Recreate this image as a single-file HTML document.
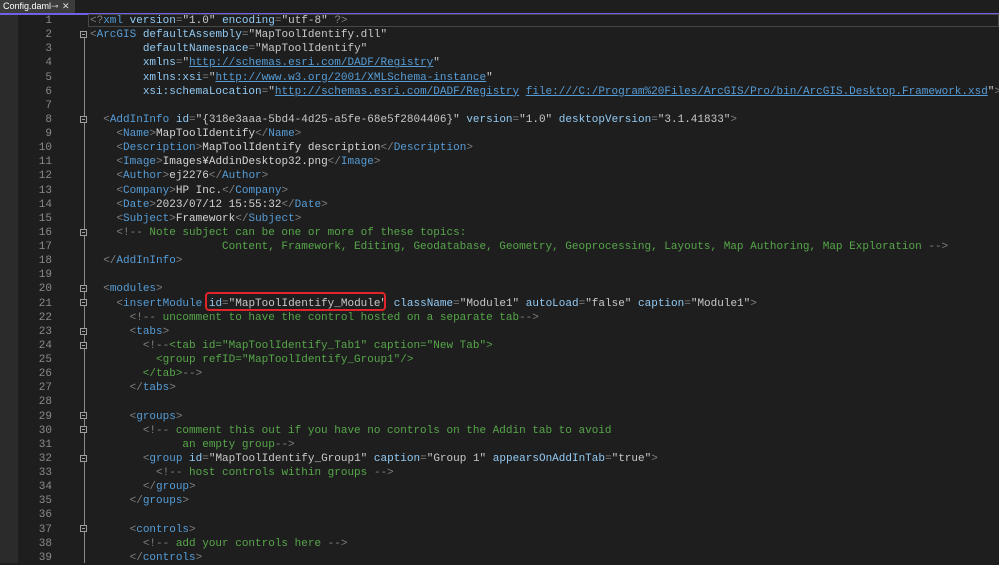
<!DOCTYPE html>
<html><head><meta charset="utf-8"><style>
html,body{margin:0;padding:0;background:#1e1e1e;width:999px;height:563px;overflow:hidden}
.tabbar{position:absolute;left:0;top:0;width:999px;height:13px;background:#1e1e1e}
.tab{position:absolute;left:0;top:0;height:13px;width:75px;background:#3c3c3c;color:#fff;font:9px "Liberation Sans",sans-serif;line-height:13px;padding-left:3px;box-sizing:border-box}
.tab .pin{position:absolute;left:51px;color:#ccc}
.tab .x{position:absolute;left:62px;color:#ddd}
.purple{position:absolute;left:0;top:13px;width:999px;height:2px;background:#7160e8}
.strip{position:absolute;left:0;top:15px;width:18px;height:548px;background:#2b2b2b}
.code{position:absolute;left:0;top:14px;width:999px;height:549px;font-family:"Liberation Mono","Noto Sans CJK JP",monospace;font-size:11px;line-height:14.13px;white-space:pre;color:#d4d4d4}
.ln{position:absolute;left:20px;top:0;width:32px;text-align:right;color:#8a8a8a}
.tx{position:absolute;left:90px;top:0}
.b{color:#808080}.t{color:#569cd6}.a{color:#92caf4}.v{color:#c8c8c8}.c{color:#57a64a}.u{color:#569cd6;text-decoration:underline}
.fold{position:absolute;left:80px;width:7px;height:7px;border:1px solid #a0a0a0;box-sizing:border-box;background:#1e1e1e}
.fold::after{content:"";position:absolute;left:1px;top:2px;width:3px;height:1px;background:#a0a0a0}
.guide{position:absolute;left:84px;width:1px;background:#8a8a8a}
.hl{position:absolute;left:88px;top:14px;width:911px;height:13px;border:1px solid #464646;box-sizing:border-box}
.red{position:absolute;left:205px;top:292px;width:181px;height:19px;border:2px solid #e0242a;border-radius:4px;box-sizing:border-box}
</style></head><body>
<div class="tabbar"><div class="tab">Config.daml<span class="pin">⊸</span><span class="x">✕</span></div></div>
<div class="purple"></div>
<div class="strip"></div>
<div class="hl"></div>
<div class="code"><div class="ln">1
2
3
4
5
6
7
8
9
10
11
12
13
14
15
16
17
18
19
20
21
22
23
24
25
26
27
28
29
30
31
32
33
34
35
36
37
38
39</div><div class="tx"><span class="b">&lt;?</span><span class="t">xml</span> <span class="a">version</span><span class="b">=</span><span class="v">"1.0"</span> <span class="a">encoding</span><span class="b">=</span><span class="v">"utf-8"</span> <span class="b">?&gt;</span>
<span class="b">&lt;</span><span class="t">ArcGIS</span> <span class="a">defaultAssembly</span><span class="b">=</span><span class="v">"MapToolIdentify.dll"</span>
        <span class="a">defaultNamespace</span><span class="b">=</span><span class="v">"MapToolIdentify"</span>
        <span class="a">xmlns</span><span class="b">=</span><span class="v">"</span><span class="u">http://schemas.esri.com/DADF/Registry</span><span class="v">"</span>
        <span class="a">xmlns:xsi</span><span class="b">=</span><span class="v">"</span><span class="u">http://www.w3.org/2001/XMLSchema-instance</span><span class="v">"</span>
        <span class="a">xsi:schemaLocation</span><span class="b">=</span><span class="v">"</span><span class="u">http://schemas.esri.com/DADF/Registry</span> <span class="u">file:///C:/Program%20Files/ArcGIS/Pro/bin/ArcGIS.Desktop.Framework.xsd</span><span class="v">"</span><span class="b">&gt;</span>

  <span class="b">&lt;</span><span class="t">AddInInfo</span> <span class="a">id</span><span class="b">=</span><span class="v">"{318e3aaa-5bd4-4d25-a5fe-68e5f2804406}"</span> <span class="a">version</span><span class="b">=</span><span class="v">"1.0"</span> <span class="a">desktopVersion</span><span class="b">=</span><span class="v">"3.1.41833"</span><span class="b">&gt;</span>
    <span class="b">&lt;</span><span class="t">Name</span><span class="b">&gt;</span>MapToolIdentify<span class="b">&lt;/</span><span class="t">Name</span><span class="b">&gt;</span>
    <span class="b">&lt;</span><span class="t">Description</span><span class="b">&gt;</span>MapToolIdentify description<span class="b">&lt;/</span><span class="t">Description</span><span class="b">&gt;</span>
    <span class="b">&lt;</span><span class="t">Image</span><span class="b">&gt;</span>Images¥AddinDesktop32.png<span class="b">&lt;/</span><span class="t">Image</span><span class="b">&gt;</span>
    <span class="b">&lt;</span><span class="t">Author</span><span class="b">&gt;</span>ej2276<span class="b">&lt;/</span><span class="t">Author</span><span class="b">&gt;</span>
    <span class="b">&lt;</span><span class="t">Company</span><span class="b">&gt;</span>HP Inc.<span class="b">&lt;/</span><span class="t">Company</span><span class="b">&gt;</span>
    <span class="b">&lt;</span><span class="t">Date</span><span class="b">&gt;</span>2023/07/12 15:55:32<span class="b">&lt;/</span><span class="t">Date</span><span class="b">&gt;</span>
    <span class="b">&lt;</span><span class="t">Subject</span><span class="b">&gt;</span>Framework<span class="b">&lt;/</span><span class="t">Subject</span><span class="b">&gt;</span>
    <span class="b">&lt;!--</span><span class="c"> Note subject can be one or more of these topics:</span>
<span class="c">                    Content, Framework, Editing, Geodatabase, Geometry, Geoprocessing, Layouts, Map Authoring, Map Exploration </span><span class="b">--&gt;</span>
  <span class="b">&lt;/</span><span class="t">AddInInfo</span><span class="b">&gt;</span>

  <span class="b">&lt;</span><span class="t">modules</span><span class="b">&gt;</span>
    <span class="b">&lt;</span><span class="t">insertModule</span> <span class="a">id</span><span class="b">=</span><span class="v">"MapToolIdentify_Module"</span> <span class="a">className</span><span class="b">=</span><span class="v">"Module1"</span> <span class="a">autoLoad</span><span class="b">=</span><span class="v">"false"</span> <span class="a">caption</span><span class="b">=</span><span class="v">"Module1"</span><span class="b">&gt;</span>
      <span class="b">&lt;!--</span><span class="c"> uncomment to have the control hosted on a separate tab</span><span class="b">--&gt;</span>
      <span class="b">&lt;</span><span class="t">tabs</span><span class="b">&gt;</span>
        <span class="b">&lt;!--</span><span class="c">&lt;tab id="MapToolIdentify_Tab1" caption="New Tab"&gt;</span>
<span class="c">          &lt;group refID="MapToolIdentify_Group1"/&gt;</span>
<span class="c">        &lt;/tab&gt;</span><span class="b">--&gt;</span>
      <span class="b">&lt;/</span><span class="t">tabs</span><span class="b">&gt;</span>

      <span class="b">&lt;</span><span class="t">groups</span><span class="b">&gt;</span>
        <span class="b">&lt;!--</span><span class="c"> comment this out if you have no controls on the Addin tab to avoid</span>
<span class="c">              an empty group</span><span class="b">--&gt;</span>
        <span class="b">&lt;</span><span class="t">group</span> <span class="a">id</span><span class="b">=</span><span class="v">"MapToolIdentify_Group1"</span> <span class="a">caption</span><span class="b">=</span><span class="v">"Group 1"</span> <span class="a">appearsOnAddInTab</span><span class="b">=</span><span class="v">"true"</span><span class="b">&gt;</span>
          <span class="b">&lt;!--</span><span class="c"> host controls within groups </span><span class="b">--&gt;</span>
        <span class="b">&lt;/</span><span class="t">group</span><span class="b">&gt;</span>
      <span class="b">&lt;/</span><span class="t">groups</span><span class="b">&gt;</span>

      <span class="b">&lt;</span><span class="t">controls</span><span class="b">&gt;</span>
        <span class="b">&lt;!--</span><span class="c"> add your controls here </span><span class="b">--&gt;</span>
      <span class="b">&lt;/</span><span class="t">controls</span><span class="b">&gt;</span></div></div>
<div class="guide" style="top:38px;height:525px"></div>
<div class="fold" style="top:31px"></div>
<div class="fold" style="top:116px"></div>
<div class="fold" style="top:229px"></div>
<div class="fold" style="top:285px"></div>
<div class="fold" style="top:299px"></div>
<div class="fold" style="top:328px"></div>
<div class="fold" style="top:342px"></div>
<div class="fold" style="top:412px"></div>
<div class="fold" style="top:426px"></div>
<div class="fold" style="top:455px"></div>
<div class="fold" style="top:525px"></div>
<div class="red"></div>
</body></html>
